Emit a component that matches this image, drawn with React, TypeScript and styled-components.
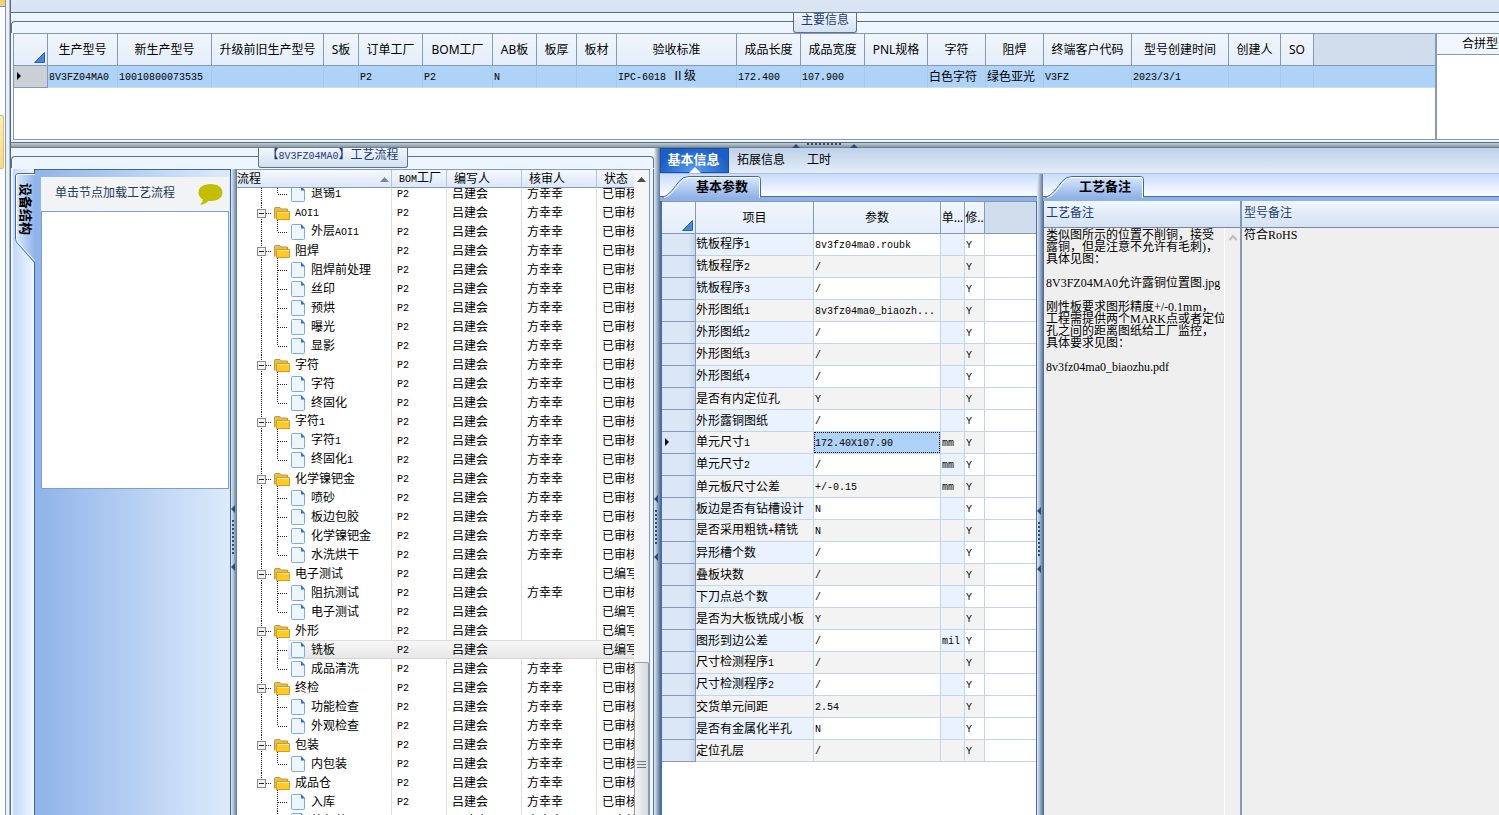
import React, { useEffect, useRef } from "react";
import styled, { createGlobalStyle, css } from "styled-components";

const CELL_FONT = `"Liberation Mono", "Noto Sans CJK SC", monospace`;
const UI_FONT = `"Noto Sans", "Noto Sans CJK SC", sans-serif`;
const LINE = "#8499b9";
const NAVY = "#1f3b77";

const GlobalStyle = createGlobalStyle`
  * { box-sizing: border-box; }
  body { margin: 0; background: #dae5f2; }
  button { font: inherit; color: inherit; padding: 0; border: 0; background: none; }
  table { border-collapse: separate; border-spacing: 0; table-layout: fixed; }
  th { font-weight: normal; }
  th, td { padding: 0; }
`;

const Mono = styled.span`
  font-size: 10px;
`;

/* Half-width runs are set smaller so two of them fill one full-width character. */
const Mixed = ({ text }: { text: string }) => (
  <>
    {text.split(/([\x20-\x7e]+)/).map((part, i) =>
      i % 2 ? <Mono key={i}>{part}</Mono> : part
    )}
  </>
);

const Screen = styled.div`
  display: flex;
  height: 100vh;
  overflow: hidden;
  font: 12px/16px ${CELL_FONT};
  color: #000;
  white-space: pre;
`;

const LeftRail = styled.aside`
  display: flex;
  flex: none;
  width: 10px;
  border-right: 1px solid #a9b5c4;
  background: #e9f0f8;
`;

const RailTrack = styled.div`
  width: 6px;
  border-right: 1px solid #8794a6;
  background: linear-gradient(#f3cf78 6px, #8a97a8 6px, #8a97a8 7px, #fbfcfe 7px);
`;

const RailButton = styled.button`
  display: block;
  width: 4px;
  height: 54px;
  margin-top: 115px;
  border: 1px solid #e0c070;
  border-left: 0;
  border-radius: 0 2px 2px 0;
  background: linear-gradient(#fbeeb4, #f6d98a);
`;

const Main = styled.main`
  display: flex;
  flex: 1;
  flex-direction: column;
  min-width: 0;
  border-left: 1px solid #5c6b80;
`;

const TopStrip = styled.div`
  flex: none;
  height: 12px;
  background: linear-gradient(#dbe6f1, #d7e3f3);
`;

const MainGroup = styled.section`
  display: flex;
  flex: none;
  flex-direction: column;
  height: 131px;
  border-top: 1px solid #5c6b80;
  border-bottom: 1px solid #5c6b80;
  background: #edf5fe;
`;

const GroupBar = styled.header`
  display: flex;
  flex: none;
  height: 20px;
`;

const FrameLine = styled.span<{ $grow: number; $side: "left" | "right" | "none" }>`
  flex: ${(p) => p.$grow} 1 0;
  height: 12px;
  margin-top: 8px;
  border-top: 1px solid #60708a;
  ${(p) => p.$side === "left" && css`border-left: 1px solid #60708a; border-top-left-radius: 4px;`}
  ${(p) => p.$side === "right" && css`border-right: 1px solid #60708a; border-top-right-radius: 4px;`}
`;

const GroupTitle = styled.h2<{ $width: number }>`
  width: ${(p) => p.$width}px;
  margin: 0;
  border: 1px solid #60708a;
  border-top: 0;
  border-radius: 0 0 3px 3px;
  background: linear-gradient(#f0f6fe, #d3e1f1);
  color: ${NAVY};
  font-size: 12px;
  font-weight: normal;
  line-height: 16px;
  text-align: center;
`;

const GridBox = styled.div`
  display: flex;
  flex: 1;
  margin: 0 0 2px 2px;
  border: 1px solid ${LINE};
  border-right: 0;
  background: #fff;
`;

const InfoArea = styled.div`
  flex: 1;
  min-width: 0;
  overflow: hidden;
`;

const InfoTable = styled.table`
  width: 100%;
  th {
    height: 32px;
    border-right: 1px solid ${LINE};
    border-bottom: 1px solid ${LINE};
    background: linear-gradient(#f1f6fd, #e3edf9);
    font-family: ${UI_FONT};
    overflow: hidden;
  }
  th:last-child { border-right: 0; background: #d0dded; }
  td {
    height: 22px;
    padding: 2px 0 0 1px;
    border-right: 1px solid #a2c9f1;
    border-bottom: 1px solid #c8def5;
    background: #afd2f7;
  }
  td:first-child {
    padding: 0 0 0 3px;
    border-color: ${LINE};
    background: #cbcfd6;
  }
  td:last-child { border-right: 0; }
`;

const SideGrid = styled.div`
  flex: none;
  width: 64px;
  overflow: hidden;
  border-left: 2px solid ${LINE};
`;

const SideHead = styled.div`
  height: 21px;
  padding: 2px 0 0 25px;
  border-bottom: 1px solid ${LINE};
  background: #f1f6fd;
  font-family: ${UI_FONT};
`;

const CornerMark = () => (
  <svg width="11" height="11" viewBox="0 0 11 11" aria-hidden="true">
    <path d="M10.500 .5V10.500H.5Z" fill="#4a86d8" stroke="#2c5fae" />
  </svg>
);

const CornerCell = styled.th`
  padding: 0 2px 2px 0;
  text-align: right;
  vertical-align: bottom;
  line-height: 0;
`;

const RowMark = () => (
  <svg width="5" height="8" viewBox="0 0 5 8" aria-hidden="true">
    <path d="M0 0L4 4L0 8Z" fill="#000" />
  </svg>
);

const HSplitter = styled.div`
  position: relative;
  flex: none;
  height: 5px;
  border-bottom: 1px solid #6f8090;
  background: linear-gradient(#c3d0da, #8796a3);
`;

const HGrip = styled.svg`
  position: absolute;
  z-index: 2;
  top: -1px;
  left: 52%;
`;

const Lower = styled.div`
  display: flex;
  flex: 1;
  min-height: 0;
`;

const ProcessGroup = styled.section`
  display: flex;
  flex: none;
  flex-direction: column;
  width: 643px;
  background: #edf5fe;
`;

const ProcessBody = styled.div`
  display: flex;
  flex: 1;
  min-height: 0;
  margin-top: 1px;
  padding: 0 3px 0 2px;
  border-right: 1px solid #60708a;
`;

const TabGutter = styled.div`
  flex: none;
  width: 21px;
  background: linear-gradient(90deg, #c3d9fa, #f1f7ff);
`;

const SideTab = styled.button`
  position: relative;
  display: block;
  width: 24px;
  height: 94px;
  margin-top: 3px;
`;

const SideTabText = styled.span`
  position: absolute;
  top: 11px;
  left: 5px;
  font: bold 13px/16px ${UI_FONT};
  writing-mode: vertical-rl;
  text-orientation: sideways;
`;

const DevicePanel = styled.div`
  flex: none;
  width: 197px;
  padding: 7px 1px 0 6px;
  border: 1px solid #3b669d;
  border-bottom: 0;
  background: linear-gradient(90deg, #8fb3e9, #dcebfb);
`;

const DeviceHead = styled.div`
  display: flex;
  align-items: center;
  justify-content: space-between;
  height: 34px;
  padding: 0 6px 0 14px;
  background: #f2f3f4;
  color: #23395d;
`;

const DeviceBox = styled.div`
  height: 278px;
  border: 1px solid #7f9fc6;
  background: #fff;
`;

const VSplitter = styled.div`
  position: relative;
  flex: none;
  width: 6px;
  background: linear-gradient(90deg, #e2ecf8, #b5c5d9 35%, #5f7692);
`;

const VGrip = styled.svg<{ $top: number }>`
  position: absolute;
  top: ${(p) => p.$top}%;
  left: -1px;
`;

const Dots = ({ top }: { top: number }) => (
  <VGrip $top={top} width="6" height="70" viewBox="0 0 6 70" aria-hidden="true">
    <path d="M5 0V8L1 4ZM5 58V66L1 62Z" fill="#2f4a78" />
    <path d="M3 15V50" stroke="#2f4a78" strokeWidth="2" strokeDasharray="2 2" />
  </VGrip>
);

const TreeBox = styled.div`
  display: flex;
  flex: 1;
  min-width: 0;
  border-top: 1px solid ${LINE};
  border-right: 1px solid ${LINE};
  background: #fff;
`;

const TreeView = styled.div`
  flex: 1;
  min-width: 0;
  overflow: hidden;
`;

const TreeTable = styled.table`
  width: 419px;
  th {
    position: sticky;
    z-index: 1;
    top: 0;
    height: 18px;
    padding: 2px 0 0 7px;
    border-right: 1px solid #b3c5df;
    border-bottom: 1px solid ${LINE};
    background: linear-gradient(#f3f8fe, #dbe7f6);
    line-height: 14px;
    text-align: left;
  }
  th:first-child { padding-left: 0; }
`;

const TreeHeadLabel = styled.span`
  display: flex;
  align-items: center;
  justify-content: space-between;
  padding-right: 2px;
`;

const TreeRow = styled.tr<{ $selected: boolean }>`
  td {
    height: 19px;
    padding: 2px 0 0 5px;
    border-right: 1px solid #dcdcdc;
    line-height: 16px;
  }
  td:first-child { padding: 0; }
  ${(p) => p.$selected && css`
    td {
      border-right: 0;
      background: linear-gradient(#f8f8f8, #e6e6e6);
      box-shadow: inset 0 1px #dcdcdc, inset 0 -1px #d4d4d4;
    }
    td:first-child {
      background: linear-gradient(#dcdcdc 1px, #f8f8f8 1px, #e6e6e6 18px, #d4d4d4 18px) 51px 0 no-repeat;
      box-shadow: none;
    }
  `}
`;

const NodeLabel = styled.span`
  display: flex;
  gap: 5px;
  height: 19px;
  align-items: center;
  svg { flex: none; }
`;

const NodeName = styled.span`
  padding-top: 2px;
`;

const ScrollBar = styled.div`
  display: flex;
  flex: none;
  flex-direction: column;
  width: 15px;
  background: #f5f5f6;
`;

const ScrollUp = styled.button`
  height: 18px;
  line-height: 0;
`;

const ScrollThumb = styled.div`
  height: 153px;
  margin-top: auto;
  padding: 98px 2px 0;
  border: 1px solid #979ba0;
  border-bottom: 0;
  border-radius: 2px 2px 0 0;
  background: linear-gradient(90deg, #f4f5f7, #d6d9de);
`;

const GripLines = styled.div`
  height: 8px;
  background: repeating-linear-gradient(#70757c 0 1px, transparent 1px 3px);
`;

const RightArea = styled.section`
  display: flex;
  flex: 1;
  flex-direction: column;
  min-width: 0;
`;

const InfoTabs = styled.nav`
  display: flex;
  flex: none;
  height: 26px;
  border-bottom: 1px solid #a9bfdd;
  background: linear-gradient(#bdd1ea, #e4edf8);
`;

const InfoTab = styled.button<{ $active?: boolean }>`
  position: relative;
  padding: 0 8px;
  margin-right: 6px;
  ${(p) => p.$active && css`
    width: 69px;
    height: 25px;
    padding: 0 2px 3px 0;
    margin-right: 0;
    border: 1px solid #1c4fa5;
    background: radial-gradient(ellipse at 50% 100%, #5c9df0, #1c5fc4 75%);
    color: #fff;
    font: bold 13px/18px ${UI_FONT};
  `}
`;

const TabPointer = styled.svg`
  position: absolute;
  bottom: -1px;
  left: 28px;
`;

const Columns = styled.div`
  display: flex;
  flex: 1;
  min-height: 0;
`;

const Pane = styled.div<{ $width?: number }>`
  display: flex;
  flex: ${(p) => (p.$width ? `0 0 ${p.$width}px` : "1")};
  flex-direction: column;
  min-width: 0;
  background: #fff;
`;

const PaneTabs = styled.div`
  flex: none;
  height: 27px;
  padding: 2px 0 0 2px;
  background: linear-gradient(#c9dcfb, #fbfdff 22px, #466ea8 22px, #466ea8 23px, #8fb1e6 23px);
`;

const PaneTab = styled.button`
  position: relative;
  display: block;
  width: 100px;
  height: 21px;
  padding: 0 0 2px 34px;
  font: bold 13px/18px ${UI_FONT};
  text-align: left;
`;

const TabShape = styled.svg`
  position: absolute;
  top: 0;
  left: 0;
`;

const TabText = styled.span`
  position: relative;
`;

const LightTabShape = () => (
  <TabShape width="102" height="23" viewBox="0 0 102 23" aria-hidden="true">
    <defs>
      <linearGradient id="tabFill" x1="0" y1="0" x2="0" y2="1">
        <stop offset="0" stopColor="#d9e8fc" />
        <stop offset="1" stopColor="#8fb1e6" />
      </linearGradient>
    </defs>
    <path d="M0 22C6 21 8 18 17 6Q21 1 27 1H96Q98 1 98 4V22Z" fill="url(#tabFill)" />
    <path d="M0 21C6 20 8 17 17 5.500Q21 .5 27 .5H95.500Q98.500 .5 98.500 3.500V21" fill="none" stroke="#3f68a2" />
    <path d="M2 21.500C8 20 10 17 18 6.500Q22 1.500 27 1.500H95.500Q97.500 1.500 97.500 3.500V22" fill="none" stroke="#fff" />
  </TabShape>
);

const ParamScroll = styled.div`
  flex: 1;
  overflow: hidden;
  border: solid #466ea8;
  border-width: 0 1px 0 2px;
`;

const ParamTable = styled.table`
  width: 100%;
  th {
    height: 33px;
    overflow: hidden;
    border-top: 1px solid ${LINE};
    border-right: 1px solid ${LINE};
    border-bottom: 1px solid ${LINE};
    background: linear-gradient(#f1f6fd, #e3edf9);
    font-family: ${UI_FONT};
  }
  th:last-child { border-right: 0; background: #d0dded; }
`;

const ParamRow = styled.tr`
  td {
    height: 22px;
    padding: 2px 0 0 1px;
    border-right: 1px solid #c2d4ea;
    border-bottom: 1px solid #c2d4ea;
  }
  td:first-child {
    padding: 0 0 0 3px;
    border-color: ${LINE};
    background: linear-gradient(90deg, #dbe7f6 80%, #c2d4ec);
  }
  td:nth-child(2), td:nth-child(4) { background: #e9f2fd; }
  td:nth-child(2) { padding-left: 0; }
  &:nth-child(even) td:nth-child(n + 2):nth-child(-n + 5) { background: #f3f3f3; }
  &:nth-child(even) td:nth-child(4) { background: #e9f2fd; }
  td:last-child { border-right: 0; }
`;

const ActiveValue = styled.span`
  display: block;
  height: 21px;
  margin: -2px 0 0 -1px;
  border: 1px dotted #000;
  background: #afd2f7;
  line-height: 20px;
`;

const Memos = styled.div`
  display: flex;
  flex: 1;
  min-height: 0;
  border-left: 1px solid #466ea8;
`;

const Memo = styled.label<{ $width?: number }>`
  display: flex;
  flex: ${(p) => (p.$width ? `0 0 ${p.$width}px` : "1")};
  flex-direction: column;
  min-width: 0;
  border-right: ${(p) => (p.$width ? `2px solid ${LINE}` : "0")};
`;

const MemoTitle = styled.span`
  flex: none;
  height: 27px;
  padding-left: 2px;
  border-bottom: 1px solid #7189a8;
  background: linear-gradient(#eff6fe, #d5e2f2);
  color: ${NAVY};
  line-height: 26px;
`;

const MemoBody = styled.span`
  display: flex;
  flex: 1;
  background: #efefef;
`;

const MemoText = styled.textarea`
  flex: 1;
  min-width: 0;
  margin: 0;
  padding: 1px 0 0 2px;
  overflow: hidden;
  border: 0;
  outline: 0;
  background: transparent;
  color: #000;
  font: 12px/12px "Liberation Serif", "Noto Sans CJK SC", serif;
  resize: none;
  white-space: pre;
`;

const MemoScroll = styled.span`
  flex: none;
  width: 16px;
  padding: 6px 0 0 4px;
  border-left: 1px solid #fff;
  line-height: 0;
`;

const infoColumns: [string, number, string][] = [
  ["生产型号", 70, "8V3FZ04MA0"],
  ["新生产型号", 94, "10010800073535"],
  ["升级前旧生产型号", 112, ""],
  ["S板", 35, ""],
  ["订单工厂", 64, "P2"],
  ["BOM工厂", 70, "P2"],
  ["AB板", 44, "N"],
  ["板厚", 40, ""],
  ["板材", 40, ""],
  ["验收标准", 120, "IPC-6018 Ⅱ级"],
  ["成品长度", 64, "172.400"],
  ["成品宽度", 64, "107.900"],
  ["PNL规格", 63, ""],
  ["字符", 58, "白色字符"],
  ["阻焊", 58, "绿色亚光"],
  ["终端客户代码", 88, "V3FZ"],
  ["型号创建时间", 97, "2023/3/1"],
  ["创建人", 52, ""],
  ["SO", 33, ""],
];

type Step = { name: string; reviewer?: string; status?: string };
type Group = Step & { steps: Step[] };

const REVIEWER = "方幸幸";
const s = (name: string, pending = false): Step => ({
  name,
  reviewer: pending ? "" : REVIEWER,
  status: pending ? "已编写" : "已审核",
});
const g = (name: string, steps: Step[], pending = false): Group => ({ ...s(name, pending), steps });

const groups: Group[] = [
  g("AOI1", [s("外层AOI1")]),
  g("阻焊", [s("阻焊前处理"), s("丝印"), s("预烘"), s("曝光"), s("显影")]),
  g("字符", [s("字符"), s("终固化")]),
  g("字符1", [s("字符1"), s("终固化1")]),
  g("化学镍钯金", [s("喷砂"), s("板边包胶"), s("化学镍钯金"), s("水洗烘干")]),
  g("电子测试", [s("阻抗测试"), s("电子测试", true)], true),
  g("外形", [s("铣板", true), s("成品清洗")], true),
  g("终检", [s("功能检查"), s("外观检查")]),
  g("包装", [s("内包装")]),
  g("成品仓", [s("入库"), s("外包装")]),
];

const params: [string, string, string][] = [
  ["铣板程序1", "8v3fz04ma0.roubk", ""],
  ["铣板程序2", "/", ""],
  ["铣板程序3", "/", ""],
  ["外形图纸1", "8v3fz04ma0_biaozh...", ""],
  ["外形图纸2", "/", ""],
  ["外形图纸3", "/", ""],
  ["外形图纸4", "/", ""],
  ["是否有内定位孔", "Y", ""],
  ["外形露铜图纸", "/", ""],
  ["单元尺寸1", "172.40X107.90", "mm"],
  ["单元尺寸2", "/", "mm"],
  ["单元板尺寸公差", "+/-0.15", "mm"],
  ["板边是否有钻槽设计", "N", ""],
  ["是否采用粗铣+精铣", "N", ""],
  ["异形槽个数", "/", ""],
  ["叠板块数", "/", ""],
  ["下刀点总个数", "/", ""],
  ["是否为大板铣成小板", "Y", ""],
  ["图形到边公差", "/", "mil"],
  ["尺寸检测程序1", "/", ""],
  ["尺寸检测程序2", "/", ""],
  ["交货单元间距", "2.54", ""],
  ["是否有金属化半孔", "N", ""],
  ["定位孔层", "/", ""],
];
const ACTIVE_PARAM = 9;

const processMemo = `类似图所示的位置不削铜，接受
露铜，但是注意不允许有毛刺)，
具体见图：

8V3FZ04MA0允许露铜位置图.jpg

刚性板要求图形精度+/-0.1mm，
工程需提供两个MARK点或者定位
孔之间的距离图纸给工厂监控，
具体要求见图：

8v3fz04ma0_biaozhu.pdf`;

const dotted = { stroke: "#222", strokeDasharray: "1 1" };

const FolderNode = ({ last }: { last: boolean }) => (
  <svg width="53" height="19" viewBox="0 0 53 19" aria-hidden="true">
    <path d={last ? "M24.500 0V7" : "M24.500 0V19"} {...dotted} />
    <path d="M29 10.500H35M40.500 17V19" {...dotted} />
    <rect x="20.500" y="6.500" width="8" height="8" fill="#f3f3f3" stroke="#8a8a8a" />
    <path d="M22 10.500H27" stroke="#222" />
    <path d="M37.500 15.500V5.500Q37.500 4.500 38.500 4.500H43L44.500 6H50.500V8" fill="#e3bd57" stroke="#c5973a" />
    <path d="M39.500 8.500H52.500V16.500H39.500Z" fill="#ffc928" stroke="#d99a1e" />
    <path d="M40 9.500H52" stroke="#ffeb8a" />
  </svg>
);

const FileNode = ({ lastStep, lastGroup }: { lastStep: boolean; lastGroup: boolean }) => (
  <svg width="69" height="19" viewBox="0 0 69 19" aria-hidden="true">
    {!lastGroup && <path d="M24.500 0V19" {...dotted} />}
    <path d={lastStep ? "M40.500 0V10" : "M40.500 0V19"} {...dotted} />
    <path d="M41 10.500H51" {...dotted} />
    <path
      d="M55.500 2.500H64L67.500 6V16.500Q67.500 17.500 66.500 17.500H55.500Q54.500 17.500 54.500 16.500V3.500Q54.500 2.500 55.500 2.500Z"
      fill="#edf5ff"
      stroke="#7baae6"
    />
    <path d="M64 2L68 6.500H64Z" fill="#2f6fd0" />
  </svg>
);

const TreeCells = ({ node, icon, selected = false }: { node: Step; icon: React.ReactNode; selected?: boolean }) => (
  <TreeRow $selected={selected}>
    <td>
      <NodeLabel>
        {icon}
        <NodeName><Mixed text={node.name} /></NodeName>
      </NodeLabel>
    </td>
    <td><Mono>P2</Mono></td>
    <td>吕建会</td>
    <td>{node.reviewer}</td>
    <td>{node.status}</td>
  </TreeRow>
);

function ProcessTree() {
  const view = useRef<HTMLDivElement>(null);
  useEffect(() => {
    if (view.current) view.current.scrollTop = 4;
  }, []);
  return (
    <TreeBox>
      <TreeView ref={view}>
        <TreeTable>
          <colgroup>
            {[155, 55, 75, 75, 59].map((w, i) => <col key={i} width={w} />)}
          </colgroup>
          <thead>
            <tr>
              <th>
                <TreeHeadLabel>
                  流程
                  <svg width="9" height="5" viewBox="0 0 9 5" aria-hidden="true">
                    <path d="M0 5L4.500 0L9 5Z" fill="#7b8694" />
                  </svg>
                </TreeHeadLabel>
              </th>
              <th><Mixed text="BOM工厂" /></th>
              <th>编写人</th>
              <th>核审人</th>
              <th>状态</th>
            </tr>
          </thead>
          <tbody>
            <TreeCells node={s("退锡1")} icon={<FileNode lastStep lastGroup={false} />} />
            {groups.map((group, gi) => {
              const lastGroup = gi === groups.length - 1;
              return (
                <React.Fragment key={group.name}>
                  <TreeCells node={group} icon={<FolderNode last={lastGroup} />} />
                  {group.steps.map((step, si) => (
                    <TreeCells
                      key={step.name}
                      node={step}
                      selected={step.name === "铣板"}
                      icon={<FileNode lastStep={!lastGroup && si === group.steps.length - 1} lastGroup={lastGroup} />}
                    />
                  ))}
                </React.Fragment>
              );
            })}
          </tbody>
        </TreeTable>
      </TreeView>
      <ScrollBar>
        <ScrollUp aria-label="向上滚动">
          <svg width="9" height="5" viewBox="0 0 9 5" aria-hidden="true">
            <path d="M0 5L4.500 0L9 5Z" fill="#4a4a4a" />
          </svg>
        </ScrollUp>
        <ScrollThumb><GripLines /></ScrollThumb>
      </ScrollBar>
    </TreeBox>
  );
}

export default function App() {
  return (
    <>
      <GlobalStyle />
      <Screen>
        <LeftRail>
          <RailTrack><RailButton aria-label="导航" /></RailTrack>
        </LeftRail>
        <Main>
          <TopStrip />
          <MainGroup>
            <GroupBar>
              <FrameLine $grow={73} $side="left" />
              <GroupTitle $width={64}>主要信息</GroupTitle>
              <FrameLine $grow={60} $side="none" />
            </GroupBar>
            <GridBox>
              <InfoArea>
                <InfoTable>
                  <colgroup>
                    <col width={34} />
                    {infoColumns.map(([name, w]) => <col key={name} width={w} />)}
                    <col />
                  </colgroup>
                  <thead>
                    <tr>
                      <CornerCell><CornerMark /></CornerCell>
                      {infoColumns.map(([name]) => <th key={name}>{name}</th>)}
                      <th />
                    </tr>
                  </thead>
                  <tbody>
                    <tr>
                      <td><RowMark /></td>
                      {infoColumns.map(([name, , value]) => (
                        <td key={name}><Mixed text={value} /></td>
                      ))}
                      <td />
                    </tr>
                  </tbody>
                </InfoTable>
              </InfoArea>
              <SideGrid><SideHead>合拼型号</SideHead></SideGrid>
            </GridBox>
          </MainGroup>
          <HSplitter>
            <HGrip width="76" height="7" viewBox="0 0 76 7" aria-hidden="true">
              <path d="M7 6L11 2L15 6ZM65 6L69 2L73 6Z" fill="#2f4a78" />
              <path d="M22 2H57" stroke="#2f4a78" strokeWidth="2" strokeDasharray="2 2" />
            </HGrip>
          </HSplitter>
          <Lower>
            <ProcessGroup>
              <GroupBar>
                <FrameLine $grow={1} $side="left" />
                <GroupTitle $width={150}><Mixed text="【8V3FZ04MA0】工艺流程" /></GroupTitle>
                <FrameLine $grow={1} $side="right" />
              </GroupBar>
              <ProcessBody>
                <TabGutter>
                  <SideTab>
                    <svg width="24" height="94" viewBox="0 0 24 94" aria-hidden="true">
                      <defs>
                        <linearGradient id="sideFill" x1="0" x2="1">
                          <stop offset="0" stopColor="#dceafd" />
                          <stop offset="1" stopColor="#8fb3e9" />
                        </linearGradient>
                      </defs>
                      <path d="M22 1H6Q2.500 1 2.500 4V66Q2.500 70 6 73L22 91Z" fill="url(#sideFill)" />
                      <path d="M22 1.500H6Q2.500 1.500 2.500 4V66Q2.500 70 6 73L22 91" fill="none" stroke="#3f68a2" />
                      <path d="M22 2.500H6Q3.500 2.500 3.500 4V66Q3.500 69 6.500 72L22 89" fill="none" stroke="#fff" />
                    </svg>
                    <SideTabText>设备结构</SideTabText>
                  </SideTab>
                </TabGutter>
                <DevicePanel>
                  <DeviceHead>
                    单击节点加载工艺流程
                    <svg width="26" height="21" viewBox="0 0 26 21" aria-hidden="true">
                      <path d="M13.500 0C20.500 0 25.500 3.500 25.500 8.500S20.500 17 13.500 17L11.500 16.900Q8 20.500 3 20.500Q6 18 6 15.500C3 14 1.500 11.500 1.500 8.500C1.500 3.500 6.500 0 13.500 0Z" fill="#c2bf00" />
                    </svg>
                  </DeviceHead>
                  <DeviceBox />
                </DevicePanel>
                <VSplitter><Dots top={52} /></VSplitter>
                <ProcessTree />
              </ProcessBody>
            </ProcessGroup>
            <VSplitter><Dots top={52} /></VSplitter>
            <RightArea>
              <InfoTabs>
                <InfoTab $active>
                  基本信息
                  <TabPointer width="12" height="6" viewBox="0 0 12 6" aria-hidden="true">
                    <path d="M0 6L6 0L12 6Z" fill="#fff" />
                  </TabPointer>
                </InfoTab>
                <InfoTab>拓展信息</InfoTab>
                <InfoTab>工时</InfoTab>
              </InfoTabs>
              <Columns>
                <Pane $width={377}>
                  <PaneTabs>
                    <PaneTab><LightTabShape /><TabText>基本参数</TabText></PaneTab>
                  </PaneTabs>
                  <ParamScroll>
                    <ParamTable>
                      <colgroup>
                        {[34, 118, 127, 24, 20].map((w, i) => <col key={i} width={w} />)}
                        <col />
                      </colgroup>
                      <thead>
                        <tr>
                          <CornerCell><CornerMark /></CornerCell>
                          <th>项目</th>
                          <th>参数</th>
                          <th>单...</th>
                          <th>修..</th>
                          <th />
                        </tr>
                      </thead>
                      <tbody>
                        {params.map(([name, value, unit], i) => (
                          <ParamRow key={name}>
                            <td>{i === ACTIVE_PARAM && <RowMark />}</td>
                            <td><Mixed text={name} /></td>
                            <td>
                              {i === ACTIVE_PARAM
                                ? <ActiveValue><Mixed text={value} /></ActiveValue>
                                : <Mixed text={value} />}
                            </td>
                            <td><Mixed text={unit} /></td>
                            <td><Mono>Y</Mono></td>
                            <td />
                          </ParamRow>
                        ))}
                      </tbody>
                    </ParamTable>
                  </ParamScroll>
                </Pane>
                <VSplitter><Dots top={52} /></VSplitter>
                <Pane>
                  <PaneTabs>
                    <PaneTab><LightTabShape /><TabText>工艺备注</TabText></PaneTab>
                  </PaneTabs>
                  <Memos>
                    <Memo $width={198}>
                      <MemoTitle>工艺备注</MemoTitle>
                      <MemoBody>
                        <MemoText readOnly defaultValue={processMemo} />
                        <MemoScroll>
                          <svg width="8" height="8" viewBox="0 0 8 8" aria-hidden="true">
                            <path d="M0.500 6L4 2L7.500 6" fill="none" stroke="#bdbdbd" strokeWidth="2" />
                          </svg>
                        </MemoScroll>
                      </MemoBody>
                    </Memo>
                    <Memo>
                      <MemoTitle>型号备注</MemoTitle>
                      <MemoBody><MemoText readOnly defaultValue="符合RoHS" /></MemoBody>
                    </Memo>
                  </Memos>
                </Pane>
              </Columns>
            </RightArea>
          </Lower>
        </Main>
      </Screen>
    </>
  );
}
